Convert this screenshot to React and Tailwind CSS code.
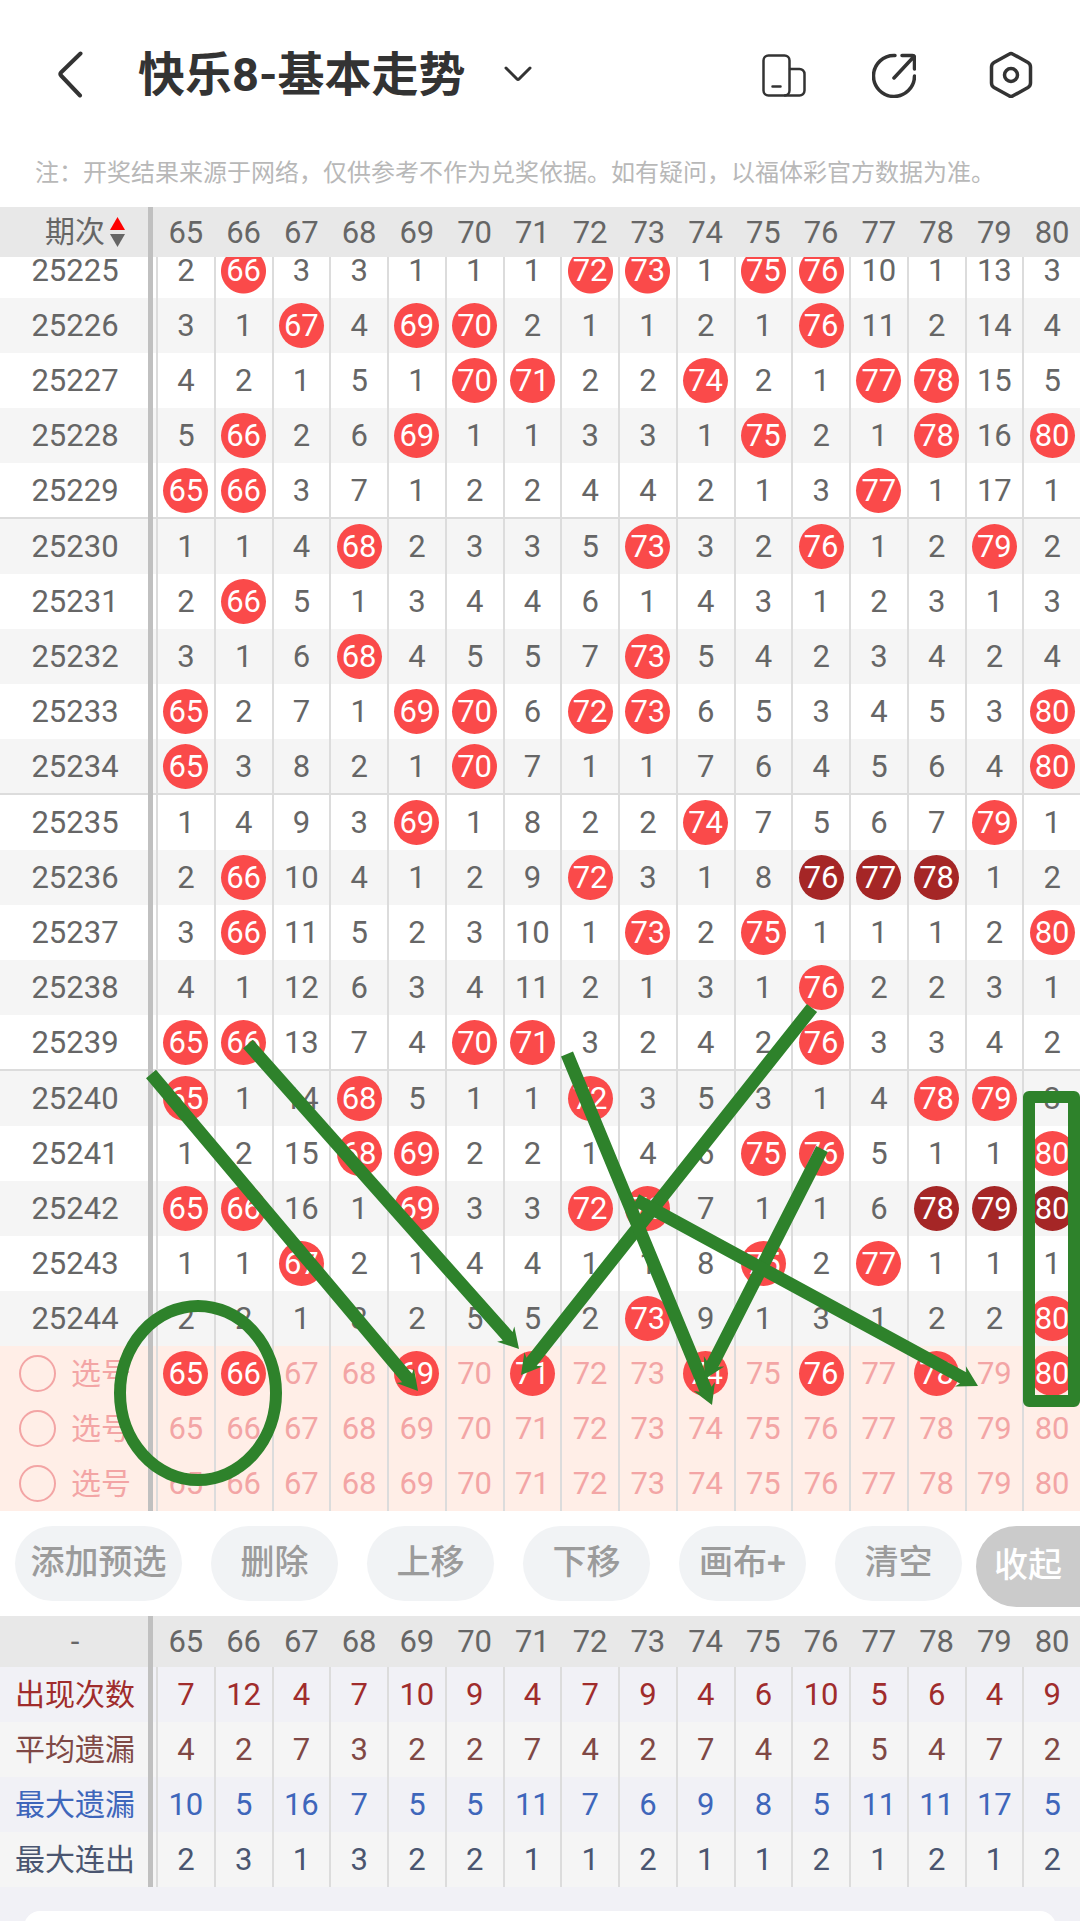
import React, { useState } from "react";

const columns = [65, 66, 67, 68, 69, 70, 71, 72, 73, 74, 75, 76, 77, 78, 79, 80];

// Omission counts per issue. A value equal to its column number is a drawn ball,
// a leading "*" marks a consecutive run of three.
const draws = [
  { issue: "25225", cells: "2 66 3 3 1 1 1 72 73 1 75 76 10 1 13 3" },
  { issue: "25226", cells: "3 1 67 4 69 70 2 1 1 2 1 76 11 2 14 4" },
  { issue: "25227", cells: "4 2 1 5 1 70 71 2 2 74 2 1 77 78 15 5" },
  { issue: "25228", cells: "5 66 2 6 69 1 1 3 3 1 75 2 1 78 16 80" },
  { issue: "25229", cells: "65 66 3 7 1 2 2 4 4 2 1 3 77 1 17 1" },
  { issue: "25230", cells: "1 1 4 68 2 3 3 5 73 3 2 76 1 2 79 2" },
  { issue: "25231", cells: "2 66 5 1 3 4 4 6 1 4 3 1 2 3 1 3" },
  { issue: "25232", cells: "3 1 6 68 4 5 5 7 73 5 4 2 3 4 2 4" },
  { issue: "25233", cells: "65 2 7 1 69 70 6 72 73 6 5 3 4 5 3 80" },
  { issue: "25234", cells: "65 3 8 2 1 70 7 1 1 7 6 4 5 6 4 80" },
  { issue: "25235", cells: "1 4 9 3 69 1 8 2 2 74 7 5 6 7 79 1" },
  { issue: "25236", cells: "2 66 10 4 1 2 9 72 3 1 8 *76 *77 *78 1 2" },
  { issue: "25237", cells: "3 66 11 5 2 3 10 1 73 2 75 1 1 1 2 80" },
  { issue: "25238", cells: "4 1 12 6 3 4 11 2 1 3 1 76 2 2 3 1" },
  { issue: "25239", cells: "65 66 13 7 4 70 71 3 2 4 2 76 3 3 4 2" },
  { issue: "25240", cells: "65 1 14 68 5 1 1 72 3 5 3 1 4 78 79 3" },
  { issue: "25241", cells: "1 2 15 68 69 2 2 1 4 6 75 76 5 1 1 80" },
  { issue: "25242", cells: "65 66 16 1 69 3 3 72 73 7 1 1 6 *78 *79 *80" },
  { issue: "25243", cells: "1 1 67 2 1 4 4 1 1 8 75 2 77 1 1 1" },
  { issue: "25244", cells: "2 2 1 3 2 5 5 2 73 9 1 3 1 2 2 80" },
];

const stats = [
  { label: "出现次数", color: "text-[#a02c2c]", bg: "bg-[#f1f1f6]", cells: "7 12 4 7 10 9 4 7 9 4 6 10 5 6 4 9" },
  { label: "平均遗漏", color: "text-[#7f4845]", bg: "bg-[#f5f5f5]", cells: "4 2 7 3 2 2 7 4 2 7 4 2 5 4 7 2" },
  { label: "最大遗漏", color: "text-[#3e66bb]", bg: "bg-[#f1f1f6]", cells: "10 5 16 7 5 5 11 7 6 9 8 5 11 11 17 5" },
  { label: "最大连出", color: "text-[#4a5570]", bg: "bg-[#f5f5f5]", cells: "2 3 1 3 2 2 1 1 2 1 1 2 1 2 1 2" },
];

// Canvas strokes: tail and tip of each arrow
const arrows = [
  [151, 867, 418, 1184],
  [248, 837, 519, 1142],
  [812, 801, 521, 1168],
  [567, 847, 712, 1198],
  [822, 942, 705, 1172],
  [636, 993, 978, 1179],
];

function Arrow({ x1, y1, x2, y2 }) {
  const length = Math.hypot(x2 - x1, y2 - y1);
  const angle = (Math.atan2(y2 - y1, x2 - x1) * 180) / Math.PI;
  const neck = length - 17;
  const barb = length - 20;
  const points = `0,-6.500 ${neck},-6.500 ${barb},-11.500 ${length},0 ${barb},11.500 ${neck},6.500 0,6.500`;
  return <polygon points={points} transform={`translate(${x1} ${y1}) rotate(${angle})`} />;
}

function Ball({ value, hot }) {
  return (
    <span
      className={`flex size-[45px] shrink-0 items-center justify-center rounded-full text-white ${
        hot ? "bg-[#a52626]" : "bg-[#fa4a4a]"
      }`}
    >
      {value}
    </span>
  );
}

// Ball of the row that is scrolled partly under the header
function CutBall({ value }) {
  return (
    <span className="h-full w-[45px] bg-[radial-gradient(circle_at_50%_14px,#fa4a4a_22px,transparent_23px)] text-white">
      {value}
    </span>
  );
}

// Left label cell with the thick divider on its right edge
function RowLabel({ children, line = "" }) {
  return (
    <th scope="row" className="h-px p-0 font-normal">
      <div className="flex h-full">
        <div className={`flex flex-1 items-center justify-center pl-[2px] ${line}`}>{children}</div>
        <div className="w-[5px] bg-[#c0c0c0]" />
        <div className={`w-[3px] ${line}`} />
      </div>
    </th>
  );
}

function HeadRow({ children, height }) {
  return (
    <tr className={`bg-[#e8e8e8] ${height}`}>
      <RowLabel>{children}</RowLabel>
      {columns.map((n) => (
        <th key={n} scope="col" className="p-0 pl-[2px] font-normal">{n}</th>
      ))}
    </tr>
  );
}

function Columns() {
  return (
    <colgroup>
      <col className="w-[156px]" />
      {columns.map((n) => (
        <col key={n} />
      ))}
    </colgroup>
  );
}

const cellClass = "border-l-2 border-l-[#dcdcdc] p-0";

export default function App() {
  const [picked, setPicked] = useState([65, 66, 69, 71, 74, 76, 78, 80]);
  const [activeRow, setActiveRow] = useState(null);

  const toggle = (n) => {
    setPicked(picked.includes(n) ? picked.filter((p) => p !== n) : [...picked, n]);
  };

  return (
    <div className="w-full overflow-hidden bg-white font-[Roboto,'Noto_Sans_CJK_SC',sans-serif] text-[31px] leading-none text-[#666666]">
      {/* Title bar */}
      <header className="flex h-[148px] items-center pr-[45px] pl-14 text-[#333333]">
        <button aria-label="返回">
          <svg className="h-12 w-7" viewBox="0 0 28 48" fill="none" stroke="currentColor" strokeWidth="4" strokeLinecap="round" strokeLinejoin="round">
            <path d="M24.500 3.500 5 22.500Q3.500 24 5 25.500L24 45.500" />
          </svg>
        </button>
        <button className="ml-[54px] flex items-center gap-[38px]">
          <h1 className="text-[47px] font-bold">快乐8-基本走势</h1>
          <svg className="h-4 w-7" viewBox="0 0 28 16" fill="none" stroke="currentColor" strokeWidth="3" strokeLinecap="round" strokeLinejoin="round">
            <path d="M2 2 13 13Q14 14 15 13L26 2" />
          </svg>
        </button>
        <div className="ml-auto flex items-center">
          <button aria-label="悬浮窗">
            <svg className="h-12 w-11" viewBox="2 0 44 48" fill="none" stroke="currentColor" strokeWidth="2.500" strokeLinecap="round">
              <rect x="3.500" y="5.500" width="26" height="40" rx="5" />
              <path d="M30 19h9.500a5 5 0 0 1 5 5v16.500a5 5 0 0 1-5 5H25M12.500 36.500h8" />
            </svg>
          </button>
          <button aria-label="分享" className="ml-[66px]">
            <svg className="h-12 w-11" viewBox="2 0 44 48" fill="none" stroke="currentColor" strokeWidth="3.500" strokeLinecap="round" strokeLinejoin="round">
              <path d="M25 5.500A20.500 20.500 0 1 0 44.500 26M24 28 44 6.500M32 5.500H42.500Q44.500 5.500 44.500 7.500V19" />
            </svg>
          </button>
          <button aria-label="设置" className="ml-[71px]">
            <svg className="size-12" viewBox="0 0 48 48" fill="none" stroke="currentColor" strokeWidth="3.500" strokeLinejoin="round">
              <path d="M22 4.200Q24 3 26 4.200L41 12.500Q43.500 14 43.500 17V33Q43.500 36 41 37.500L26 45.800Q24 47 22 45.800L7 37.500Q4.500 36 4.500 33V17Q4.500 14 7 12.500Z" />
              <circle cx="24" cy="25" r="6.500" />
            </svg>
          </button>
        </div>
      </header>

      <p className="mb-[9px] flex h-[50px] items-center pl-[35px] text-2xl whitespace-nowrap text-[#b8b8b8]">
        注：开奖结果来源于网络，仅供参考不作为兑奖依据。如有疑问，以福体彩官方数据为准。
      </p>

      {/* Trend chart */}
      <div className="relative">
        <table className="w-full table-fixed border-separate border-spacing-0 text-center">
          <Columns />
          <thead>
            <HeadRow height="h-[50px]">
              <button className="ml-5 flex items-center gap-[5px] text-[30px]">
                期次
                <svg className="h-[30px] w-[15px]" viewBox="0 0 15 30">
                  <path d="M7.500 0 15 13H0Z" fill="#fe0000" />
                  <path d="M0 17H15L7.500 30Z" fill="#666666" />
                </svg>
              </button>
            </HeadRow>
          </thead>
          <tbody>
            {draws.map(({ issue, cells }, i) => {
              const line = i % 5 === 4 && i < 19 ? "border-b-2 border-b-[#dcdcdc]" : "";
              const height = i === 0 ? "h-[41px]" : line ? "h-[56px]" : "h-[55px]";
              const inner = i === 0 ? "h-[41px] leading-[28px]" : "items-center";
              return (
                <tr key={issue} className={`${height} ${i % 2 ? "bg-[#f5f5f5]" : "bg-white"}`}>
                  <RowLabel line={line}>
                    <div className={`flex ${inner}`}>{issue}</div>
                  </RowLabel>
                  {cells.split(" ").map((value, c) => {
                    const hot = value.startsWith("*");
                    const number = value.replace("*", "");
                    const drawn = number === String(columns[c]);
                    return (
                      <td key={c} className={`${cellClass} ${line}`}>
                        <div className={`flex justify-center ${inner}`}>
                          {!drawn && number}
                          {drawn && (i === 0 ? <CutBall value={number} /> : <Ball value={number} hot={hot} />)}
                        </div>
                      </td>
                    );
                  })}
                </tr>
              );
            })}
            {[0, 1, 2].map((row) => (
              <tr key={row} className="h-[55px] bg-[#ffeee7] text-[#f3a5a5]">
                <RowLabel>
                  <label className="flex items-center gap-[15px] text-[30px]">
                    <input
                      type="radio"
                      name="pick"
                      checked={activeRow === row}
                      onChange={() => setActiveRow(row)}
                      className="size-[37px] appearance-none rounded-full border-2 border-[#f3a5a5] checked:bg-[#fa4a4a]"
                    />
                    选号
                  </label>
                </RowLabel>
                {columns.map((n) => (
                  <td key={n} className={cellClass}>
                    <button onClick={() => toggle(n)} className="flex w-full justify-center">
                      {row === 0 && picked.includes(n) ? <Ball value={n} /> : n}
                    </button>
                  </td>
                ))}
              </tr>
            ))}
          </tbody>
        </table>

        {/* Drawing canvas */}
        <svg className="pointer-events-none absolute inset-0 size-full" viewBox="0 0 1080 1304" preserveAspectRatio="none" fill="#2e822b">
          {arrows.map(([x1, y1, x2, y2]) => (
            <Arrow key={x1} x1={x1} y1={y1} x2={x2} y2={y2} />
          ))}
          <ellipse cx="198" cy="1186" rx="78" ry="87" fill="none" stroke="#2e822b" strokeWidth="12" />
          <rect x="1029" y="890" width="45" height="304" fill="none" stroke="#2e822b" strokeWidth="12" strokeLinejoin="round" />
        </svg>
      </div>

      {/* Actions */}
      <div className="flex h-[105px] gap-[29px] pt-[15px] pl-[15px] text-[34px] font-medium text-[#9b9b9b]">
        <button className="h-[75px] w-[167px] shrink-0 rounded-full bg-[#f1f3f5] pb-1">添加预选</button>
        {["删除", "上移", "下移", "画布+", "清空"].map((name) => (
          <button key={name} className="h-[75px] w-[127px] shrink-0 rounded-full bg-[#f1f3f5] pb-1">{name}</button>
        ))}
        <button className="-ml-[15px] h-[81px] flex-1 rounded-l-full bg-[#cbcbcb] pb-1 pl-[18px] text-left whitespace-nowrap text-white">收起</button>
      </div>

      {/* Summary */}
      <table className="w-full table-fixed border-separate border-spacing-0 text-center">
        <Columns />
        <thead>
          <HeadRow height="h-[51px]">-</HeadRow>
        </thead>
        <tbody>
          {stats.map(({ label, color, bg, cells }) => (
            <tr key={label} className={`h-[55px] ${bg} ${color}`}>
              <RowLabel>
                <span className="text-[30px]">{label}</span>
              </RowLabel>
              {cells.split(" ").map((value, c) => (
                <td key={c} className={cellClass}>{value}</td>
              ))}
            </tr>
          ))}
        </tbody>
      </table>

      <div className="bg-[#f1f1f6] px-6 pt-6">
        <div className="h-[11px] overflow-hidden">
          <div className="h-10 rounded-t-2xl bg-white" />
        </div>
      </div>
    </div>
  );
}
